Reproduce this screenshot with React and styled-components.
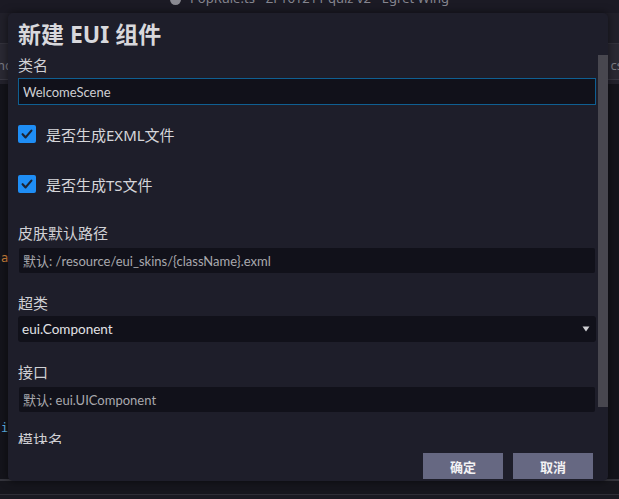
import React from 'react';
import styled, { createGlobalStyle } from 'styled-components';

const Global = createGlobalStyle`
  html, body { margin: 0; padding: 0; background: #14141b; overflow: hidden; }
  body { font-family: "Noto Sans", "Noto Sans CJK SC", sans-serif; }
  * { box-sizing: border-box; }
`;

const Workbench = styled.div`
  position: relative;
  width: 619px;
  height: 499px;
  display: flex;
  flex-direction: column;
  background: #14141b;
  overflow: hidden;
`;

const TitleBar = styled.div`
  height: 13px;
  flex: none;
  background: #1b1a24;
  display: flex;
  justify-content: center;
  align-items: flex-start;
  gap: 9px;
  overflow: hidden;
  color: #85858f;
  font-size: 13px;
  line-height: 13px;
`;

const TitleText = styled.span`
  margin-top: -8px;
  white-space: nowrap;
`;

const TitleIcon = styled.span`
  margin-top: -6px;
  width: 11px;
  height: 11px;
  border-radius: 50%;
  background: #8a8a92;
`;

const Toolbar = styled.div`
  height: 31px;
  flex: none;
  background: #21202a;
  border-bottom: 1px solid #33323c;
`;

const TabStrip = styled.div`
  height: 36px;
  flex: none;
  background: #2a2933;
  border-bottom: 1px solid #3a3944;
  display: flex;
  justify-content: space-between;
  align-items: center;
  color: #7c7c86;
  font-size: 13px;
  padding-top: 6px;
`;

const Tab = styled.span`
  white-space: nowrap;
  margin: ${p => (p.$end ? '0 -4px 0 0' : '0 0 0 -3px')};
`;

const SubStrip = styled.div`
  height: 4px;
  flex: none;
  background: #23222c;
`;

const Editor = styled.div`
  flex: 1;
  background: #14141b;
  padding-top: 13px;
  font-family: "DejaVu Sans Mono", monospace;
  font-size: 12px;
`;

const CodeLine = styled.div`
  height: 17px;
  line-height: 17px;
  padding-left: ${p => p.$indent || 0}px;
  color: ${p => p.$color || '#cfcfcf'};
`;

const PanelLine = styled.div`
  height: 2px;
  flex: none;
  background: #35353d;
`;

const StatusBar = styled.div`
  height: 14px;
  flex: none;
  background: #16161d;
  border-bottom: 1px solid #2e2e36;
`;

const BottomBar = styled.div`
  height: 4px;
  flex: none;
  background: #1a1a22;
`;

/* ---------- dialog ---------- */

const Dialog = styled.div`
  position: absolute;
  left: 8px;
  top: 13px;
  width: 600px;
  height: 468px;
  background: #1e1e2a;
  border-radius: 5px;
  box-shadow: 0 0 8px rgba(0, 0, 0, 0.55);
  display: flex;
  flex-direction: column;
  padding: 6px 0 2px 10px;
  overflow: hidden;
  color: #d2d2d6;
`;

const DialogTitle = styled.h1`
  margin: 0;
  height: 30px;
  flex: none;
  font-size: 23px;
  line-height: 30px;
  font-weight: 700;
  color: #d8d8dc;
  white-space: nowrap;
`;

const Body = styled.div`
  position: relative;
  height: 395px;
  flex: none;
  overflow: hidden;
  padding-right: 12px;
`;

const Form = styled.div`
  display: flex;
  flex-direction: column;
`;

const Label = styled.div`
  height: 20px;
  line-height: 20px;
  font-size: 15px;
  color: #d0d0d4;
  margin-top: ${p => p.$top}px;
  white-space: nowrap;
`;

const fieldFont = `"Lato", "Noto Sans CJK SC", sans-serif`;

const TextInput = styled.input`
  display: block;
  width: 100%;
  height: 27px;
  margin: ${p => p.$top}px 0 0 0;
  padding: 0 4px;
  border: 1px solid ${p => (p.$focused ? '#0f5f92' : 'transparent')};
  background: #11111a;
  background-clip: padding-box;
  border-radius: ${p => (p.$focused ? '0' : '3px')};
  color: #cfcfd3;
  font-family: ${fieldFont};
  font-size: 13px;
  outline: none;
  &::placeholder { color: #a9a9ae; opacity: 1; }
`;

const Select = styled.div`
  height: 26px;
  margin-top: ${p => p.$top}px;
  background: #11111a;
  border-radius: 3px;
  display: flex;
  align-items: center;
  justify-content: space-between;
  padding: 0 6px 0 4px;
  font-family: ${fieldFont};
  font-size: 13.5px;
  color: #e2e2e6;
`;

const CheckRow = styled.div`
  height: 50px;
  margin-top: ${p => p.$top || 0}px;
  display: flex;
  align-items: center;
  gap: 10px;
  font-size: 15px;
  color: #d6d6da;
  white-space: nowrap;
`;

const CheckBox = styled.span`
  width: 18px;
  height: 18px;
  flex: none;
  border-radius: 2px;
  background: #1f8ef5;
  display: flex;
  align-items: center;
  justify-content: center;
`;

const Thumb = styled.div`
  position: absolute;
  right: 0;
  top: 6px;
  width: 10px;
  height: 352px;
  background: #48474f;
`;

const Footer = styled.div`
  height: 35px;
  flex: none;
  display: flex;
  justify-content: flex-end;
  align-items: flex-end;
  gap: 10px;
  padding-right: 15px;
`;

const Button = styled.button`
  width: 80px;
  height: 26px;
  border: none;
  border-radius: 0;
  background: #666882;
  color: #f2f2f4;
  font-family: "Noto Sans CJK SC", sans-serif;
  font-size: 13px;
  font-weight: 700;
  padding: 0;
`;

const Check = () => (
  <CheckBox>
    <svg width="18" height="18" viewBox="0 0 18 18">
      <path d="M4.6 9.2 L7.6 12.4 L13.4 5.6" fill="none" stroke="#1d2433" strokeWidth="2.2" strokeLinecap="round" strokeLinejoin="round" />
    </svg>
  </CheckBox>
);

const Arrow = () => (
  <svg width="8" height="8" viewBox="0 0 8 8">
    <path d="M0.5 1.5 H7.5 L4 6.5 Z" fill="#cfcfd3" />
  </svg>
);

export default function App() {
  const emptyLines = Array.from({ length: 9 });
  const midLines = Array.from({ length: 9 });
  return (
    <>
      <Global />
      <Workbench>
        <TitleBar>
          <TitleIcon />
          <TitleText>PopRule.ts - ZF161211 quiz v2 - Egret Wing</TitleText>
        </TitleBar>
        <Toolbar />
        <TabStrip>
          <Tab>nc</Tab>
          <Tab $end>cs</Tab>
        </TabStrip>
        <SubStrip />
        <Editor>
          {emptyLines.map((_, i) => <CodeLine key={'a' + i} />)}
          <CodeLine $color="#d7863d" $indent={1}>a</CodeLine>
          {midLines.map((_, i) => <CodeLine key={'b' + i} />)}
          <CodeLine $color="#5fb6e8" $indent={1}>i</CodeLine>
        </Editor>
        <PanelLine />
        <StatusBar />
        <BottomBar />

        <Dialog>
          <DialogTitle>新建 EUI 组件</DialogTitle>
          <Body>
            <Form>
              <Label $top={6}>类名</Label>
              <TextInput $top={3} $focused readOnly value="WelcomeScene" />
              <CheckRow $top={4}><Check />是否生成EXML文件</CheckRow>
              <CheckRow><Check />是否生成TS文件</CheckRow>
              <Label $top={14}>皮肤默认路径</Label>
              <TextInput $top={4} readOnly placeholder="默认: /resource/eui_skins/{className}.exml" />
              <Label $top={19}>超类</Label>
              <Select $top={3}>
                <span>eui.Component</span>
                <Arrow />
              </Select>
              <Label $top={20}>接口</Label>
              <TextInput $top={4} readOnly placeholder="默认: eui.UIComponent" />
              <Label $top={17}>模块名</Label>
              <TextInput $top={4} readOnly />
            </Form>
            <Thumb />
          </Body>
          <Footer>
            <Button>确定</Button>
            <Button>取消</Button>
          </Footer>
        </Dialog>
      </Workbench>
    </>
  );
}
